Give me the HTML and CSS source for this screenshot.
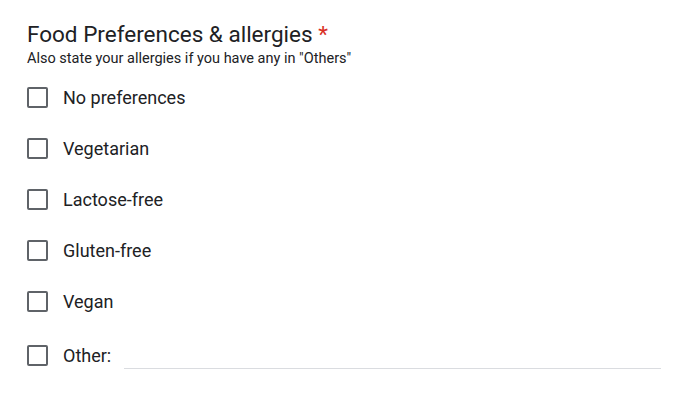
FILE: index.html
```html
<!DOCTYPE html>
<html>
<head>
<meta charset="utf-8">
<link rel="stylesheet" href="styles.css">
</head>
<body>
<div class="question">
  <div class="title">Food Preferences &amp; allergies <span class="req">*</span></div>
  <div class="desc">Also state your allergies if you have any in "Others"</div>
  <div class="options">
    <label class="opt"><span class="box"></span><span class="label">No preferences</span></label>
    <label class="opt"><span class="box"></span><span class="label">Vegetarian</span></label>
    <label class="opt"><span class="box"></span><span class="label">Lactose-free</span></label>
    <label class="opt"><span class="box"></span><span class="label">Gluten-free</span></label>
    <label class="opt"><span class="box"></span><span class="label">Vegan</span></label>
    <label class="opt other"><span class="box"></span><span class="label">Other:</span><span class="line"></span></label>
  </div>
</div>
</body>
</html>
```
FILE: styles.css
```css
html, body {
  margin: 0;
  padding: 0;
  background: #fff;
}
body {
  font-family: Roboto, "Liberation Sans", sans-serif;
  color: #202124;
  width: 693px;
  height: 400px;
  overflow: hidden;
}
.question {
  padding: 18px 32px 0 27px;
}
.title {
  font-size: 22.5px;
  line-height: 32px;
  color: #202124;
}
.req {
  color: #d93025;
}
.desc {
  font-size: 14.5px;
  line-height: 18px;
  color: #202124;
}
.options {
  display: flex;
  flex-direction: column;
  margin-top: 4px;
}
.opt {
  display: flex;
  align-items: center;
  height: 51px;
}
.box {
  box-sizing: border-box;
  width: 21px;
  height: 21px;
  border: 2px solid #5f6368;
  border-radius: 2px;
  flex: none;
}
.label {
  font-size: 18px;
  margin-left: 15px;
  color: #202124;
}
.other {
  height: 56px;
}
.line {
  flex: 1;
  align-self: flex-end;
  margin: 0 0 14px 13px;
  border-bottom: 1px solid #dadce0;
  height: 0;
}
```
